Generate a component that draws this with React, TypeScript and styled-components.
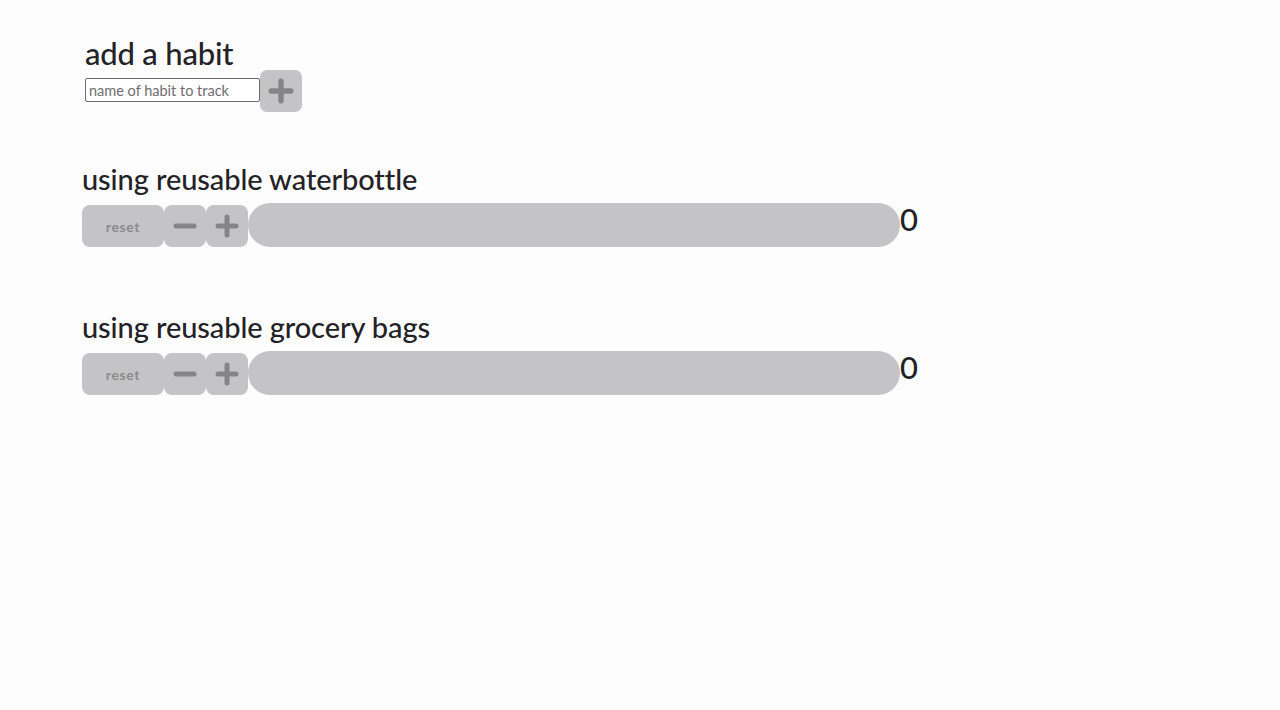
import React, { useState } from 'react';
import styled, { createGlobalStyle } from 'styled-components';

const GlobalStyle = createGlobalStyle`
  html, body {
    margin: 0;
    padding: 0;
    background: #fdfdfd;
  }
  body {
    font-family: 'Lato', 'Liberation Sans', sans-serif;
    color: #232227;
  }
`;

type Habit = {
  name: string;
  count: number;
};

const initialHabits: Habit[] = [
  { name: 'using reusable waterbottle', count: 0 },
  { name: 'using reusable grocery bags', count: 0 },
];

const PlusIcon = ({ size = 24 }: { size?: number }) => (
  <svg width={size} height={size} viewBox="0 0 24 24">
    <path d="M12 3v18M3 12h18" stroke="#858587" strokeWidth="5" strokeLinecap="round" />
  </svg>
);

const MinusIcon = ({ size = 24 }: { size?: number }) => (
  <svg width={size} height={size} viewBox="0 0 24 24">
    <path d="M3 12h18" stroke="#858587" strokeWidth="5" strokeLinecap="round" />
  </svg>
);

const App: React.FC = () => {
  const [habits] = useState<Habit[]>(initialHabits);

  return (
    <Page>
      <GlobalStyle />
      <AddSection>
        <Heading>add a habit</Heading>
        <AddRow>
          <NameInput placeholder="name of habit to track" />
          <AddButton>
            <PlusIcon size={26} />
          </AddButton>
        </AddRow>
      </AddSection>
      <HabitList>
        {habits.map((habit) => (
          <HabitItem key={habit.name}>
            <HabitTitle>{habit.name}</HabitTitle>
            <Controls>
              <ResetButton>reset</ResetButton>
              <SquareButton>
                <MinusIcon />
              </SquareButton>
              <SquareButton>
                <PlusIcon />
              </SquareButton>
              <Track />
              <Count>{habit.count}</Count>
            </Controls>
          </HabitItem>
        ))}
      </HabitList>
    </Page>
  );
};

export default App;

const Page = styled.div`
  min-height: 710px;
  padding: 36px 0 0 82px;
  box-sizing: border-box;
`;

const AddSection = styled.section`
  padding-left: 3px;
  display: flex;
  flex-direction: column;
`;

const Heading = styled.h1`
  margin: 0;
  font-size: 31px;
  font-weight: 500;
  line-height: 34px;
  letter-spacing: -0.2px;
`;

const AddRow = styled.div`
  display: flex;
  align-items: flex-start;
`;

const NameInput = styled.input`
  margin-top: 8px;
  width: 175px;
  height: 24px;
  box-sizing: border-box;
  border: 1px solid #6b6b6f;
  border-radius: 2px;
  padding: 0 3px;
  font-family: 'Lato', 'Liberation Sans', sans-serif;
  font-size: 14.5px;
  color: #333;
  background: #fff;
  &::placeholder {
    color: #6d6d70;
  }
`;

const AddButton = styled.button`
  width: 42px;
  height: 42px;
  border: none;
  border-radius: 7px;
  background: #c4c4c6;
  display: flex;
  align-items: center;
  justify-content: center;
  padding: 0;
`;

const HabitList = styled.div`
  margin-top: 49px;
  display: flex;
  flex-direction: column;
  gap: 62px;
`;

const HabitItem = styled.div`
  display: flex;
  flex-direction: column;
`;

const HabitTitle = styled.h2`
  margin: 0 0 6px;
  font-size: 29px;
  font-weight: 500;
  line-height: 36px;
  letter-spacing: -0.1px;
`;

const Controls = styled.div`
  display: flex;
  align-items: flex-end;
  height: 44px;
`;

const ButtonBase = styled.button`
  height: 42px;
  border: none;
  border-radius: 8px;
  background: #c4c4c6;
  display: flex;
  align-items: center;
  justify-content: center;
  padding: 0;
`;

const ResetButton = styled(ButtonBase)`
  width: 82px;
  font-family: 'Lato', 'Liberation Sans', sans-serif;
  font-size: 14px;
  font-weight: 700;
  letter-spacing: 0.6px;
  color: #8a8a8d;
`;

const SquareButton = styled(ButtonBase)`
  width: 42px;
`;

const Track = styled.div`
  width: 652px;
  height: 44px;
  border-radius: 22px;
  background: #c4c4c6;
`;

const Count = styled.span`
  align-self: flex-start;
  font-size: 31px;
  font-weight: 500;
  line-height: 32px;
`;
